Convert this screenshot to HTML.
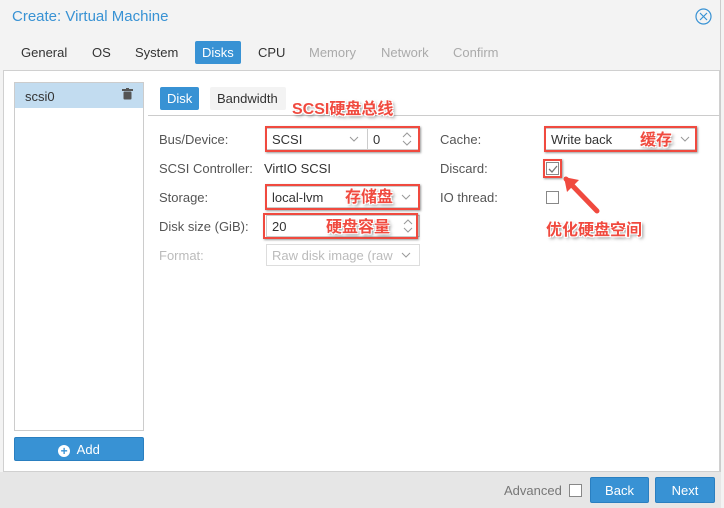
<!DOCTYPE html>
<html><head><meta charset="utf-8"><style>
*{box-sizing:border-box;margin:0;padding:0}
body{width:724px;height:508px;overflow:hidden;background:#f3f3f3;font-family:"Liberation Sans","Noto Sans CJK SC",sans-serif;font-size:13px;color:#333;position:relative}
.a{position:absolute}
.win{left:0;top:0;width:721px;height:508px;border-right:1px solid #ccc;background:#f3f3f3}
.title{left:12px;top:8px;font-size:15px;color:#3892d4}
.tab{top:45px;font-size:13px;color:#333}
.dis{color:#aaa}
.panel{left:3px;top:70px;width:717px;height:402px;background:#fff;border:1px solid #d0d0d0}
.footer{left:0;top:472px;width:721px;height:36px;background:#e6e6e6}
.btn{background:#3892d4;color:#fff;border:1px solid #2a7fc0;border-radius:2px;text-align:center;font-size:13px}
.lbl{left:159px;color:#555}
.field{height:22px;border:1px solid #ccc;background:#fff;padding:3px 5px;font-size:13px}
.red{border:2.5px solid #f04a3f;box-shadow:1px 1px 2px rgba(0,0,0,.4)}
.ann{color:#f04a3f;font-weight:bold;font-size:16px;text-shadow:1px 1px 0 #fff,-1px -1px 0 #fff,1px -1px 0 #fff,-1px 1px 0 #fff,2px 2px 3px rgba(0,0,0,.5)}
.cb{width:13px;height:13px;border:1px solid #888;background:#fff}
</style></head><body>
<div class="a win"></div>
<div class="a title">Create: Virtual Machine</div>
<svg class="a" style="left:695px;top:8px" width="17" height="17"><circle cx="8.5" cy="8.5" r="7.5" fill="none" stroke="#3892d4" stroke-width="1.2"/><path d="M5 5L12 12M12 5L5 12" stroke="#3892d4" stroke-width="1.2"/></svg>
<div class="a tab" style="left:21px">General</div>
<div class="a tab" style="left:92px">OS</div>
<div class="a tab" style="left:135px">System</div>
<div class="a" style="left:195px;top:41px;width:46px;height:23px;background:#3892d4;border-radius:2px"></div>
<div class="a tab" style="left:202px;color:#fff">Disks</div>
<div class="a tab" style="left:258px">CPU</div>
<div class="a tab dis" style="left:309px">Memory</div>
<div class="a tab dis" style="left:381px">Network</div>
<div class="a tab dis" style="left:453px">Confirm</div>
<div class="a panel"></div>
<div class="a" style="left:14px;top:82px;width:130px;height:349px;border:1px solid #ccc;background:#fff"></div>
<div class="a" style="left:15px;top:83px;width:128px;height:25px;background:#c2dcf0"></div>
<div class="a" style="left:25px;top:89px">scsi0</div>
<svg class="a" style="left:122px;top:88px" width="11" height="12"><rect x="0" y="1" width="11" height="2" fill="#555"/><rect x="4" y="0" width="3" height="2" fill="#555"/><rect x="1.5" y="3.5" width="8" height="8" rx="1" fill="#555"/></svg>
<div class="a btn" style="left:14px;top:437px;width:130px;height:24px;padding-top:4px"><span style="display:inline-block;width:12px;height:12px;border-radius:6px;background:#fff;color:#3892d4;font-weight:bold;font-size:12px;line-height:12px;vertical-align:-1px">+</span>&nbsp; Add</div>
<div class="a" style="left:160px;top:87px;width:39px;height:23px;background:#3892d4;border-radius:2px;color:#fff;padding:4px 0 0 7px">Disk</div>
<div class="a" style="left:210px;top:87px;width:76px;height:23px;background:#f3f3f3;border-radius:2px;padding:4px 0 0 7px">Bandwidth</div>
<div class="a" style="left:148px;top:115px;width:572px;height:1px;background:#ccc"></div>
<div class="a ann" style="left:292px;top:95px">SCSI硬盘总线</div>
<div class="a lbl" style="top:132px">Bus/Device:</div>
<div class="a lbl" style="top:161px">SCSI Controller:</div>
<div class="a lbl" style="top:190px">Storage:</div>
<div class="a lbl" style="top:219px">Disk size (GiB):</div>
<div class="a lbl" style="top:248px;color:#bbb">Format:</div>
<svg width="0" height="0" style="position:absolute"><defs><symbol id="dn" viewBox="0 0 10 6"><path d="M1 1L5 5L9 1" fill="none" stroke="#999" stroke-width="1"/></symbol><symbol id="ud" viewBox="0 0 10 16"><path d="M1 6L5 2L9 6M1 10L5 14L9 10" fill="none" stroke="#999" stroke-width="1"/></symbol></defs></svg>
<div class="a field" style="left:266px;top:128px;width:102px">SCSI<svg class="a" style="right:8px;top:7px" width="10" height="6"><use href="#dn"/></svg></div>
<div class="a field" style="left:367px;top:128px;width:52px">0<svg class="a" style="right:6px;top:2px" width="10" height="16"><use href="#ud"/></svg></div>
<div class="a red" style="left:265px;top:126px;width:155px;height:26px"></div>
<div class="a" style="left:264px;top:161px;color:#333">VirtIO SCSI</div>
<div class="a field" style="left:266px;top:186px;width:154px">local-lvm<svg class="a" style="right:8px;top:7px" width="10" height="6"><use href="#dn"/></svg></div>
<div class="a red" style="left:265px;top:184px;width:155px;height:26px"></div>
<div class="a ann" style="left:345px;top:183px">存储盘</div>
<div class="a field" style="left:266px;top:215px;width:154px">20<svg class="a" style="right:6px;top:2px" width="10" height="16"><use href="#ud"/></svg></div>
<div class="a red" style="left:263px;top:213px;width:155px;height:26px"></div>
<div class="a ann" style="left:326px;top:213px">硬盘容量</div>
<div class="a field" style="left:266px;top:244px;width:154px;color:#bbb;border-color:#ddd">Raw disk image (raw<svg class="a" style="right:8px;top:7px" width="10" height="6"><use href="#dn"/></svg></div>
<div class="a" style="left:440px;top:132px;color:#555">Cache:</div>
<div class="a" style="left:440px;top:161px;color:#555">Discard:</div>
<div class="a" style="left:440px;top:190px;color:#555">IO thread:</div>
<div class="a field" style="left:545px;top:128px;width:152px">Write back<svg class="a" style="right:6px;top:7px" width="10" height="6"><use href="#dn"/></svg></div>
<div class="a red" style="left:544px;top:126px;width:153px;height:26px"></div>
<div class="a ann" style="left:640px;top:126px">缓存</div>
<div class="a cb" style="left:546px;top:162px"></div>
<svg class="a" style="left:547px;top:163px" width="12" height="12"><path d="M2 6L5 9L10 3" fill="none" stroke="#777" stroke-width="1.3"/></svg>
<div class="a red" style="left:543px;top:159px;width:19px;height:19px"></div>
<div class="a cb" style="left:546px;top:191px"></div>
<svg class="a" style="left:555px;top:170px" width="50" height="50"><path d="M11 9L42 41" stroke="#f04a3f" stroke-width="5" stroke-linecap="round"/><path d="M9 7L24 10L12 22Z" fill="#f04a3f"/></svg>
<div class="a ann" style="left:546px;top:216px">优化硬盘空间</div>
<div class="a footer"></div>
<div class="a" style="left:504px;top:483px;color:#777">Advanced</div>
<div class="a cb" style="left:569px;top:484px;width:13px;height:13px"></div>
<div class="a btn" style="left:590px;top:477px;width:59px;height:26px;padding-top:5px">Back</div>
<div class="a btn" style="left:655px;top:477px;width:60px;height:26px;padding-top:5px">Next</div>
</body></html>
